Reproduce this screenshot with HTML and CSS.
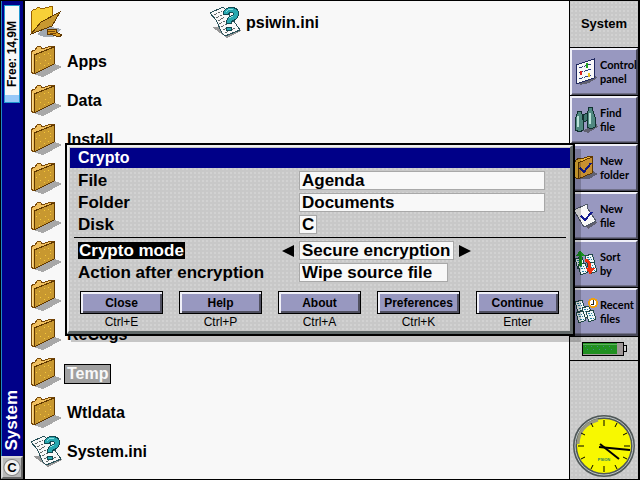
FILE: index.html
```html
<!DOCTYPE html>
<html lang="en">
<head>
    <meta charset="UTF-8">
    <meta name="viewport" content="width=device-width, initial-scale=1.0">
    <title>System - Crypto</title>
    <link rel="stylesheet" href="styles.css">
</head>
<body>

    <!-- shared icons -->
    <svg class="defs" width="0" height="0" aria-hidden="true">
        <symbol id="folder" viewBox="0 0 32 32">
            <path d="M3 29 L23 18 L32 22 L15 31 L12 32 Z" fill="#a8a8a8"/>
            <path d="M1 8 L3 5 L5 5 L8 1 L11 2 L12 4 L21 1 L24 2 V19 L4 29 L1 27 Z" fill="#f0c060" stroke="#784808"/>
            <path d="M4 10 L24 2 V19 L4 29 Z" fill="#c89830" stroke="#603800"/>
            <path d="M2 9 V27" stroke="#f8d888"/>
            <path d="M9 12h1M14 9h1M18 8h1M20 13h1M10 18h1M15 15h1M18 18h1M14 20h1M9 24h1M6 15h1M20 10h1" stroke="#f8c838"/>
        </symbol>
        <symbol id="folder-up" viewBox="0 0 32 32">
            <path d="M7 28 L18 20 L31 23 L24 31 L14 31 Z" fill="#a0a8b0"/>
            <path d="M1 6 L4 3 L6 3 L8 1 L12 3 L22 0 L23 8 L19 17 L4 27 L1 28 Z" fill="#f8d038" stroke="#986000"/>
            <path d="M1 28 L11 16 L30 6 L22 20 Z" fill="#c89830" stroke="#603800"/>
            <path d="M17 23 L26 23 L26 26 L32 29 L29 31 L20 28 L17 29 Z" fill="#d89820" stroke="#603800"/>
            <path d="M18 25h7M20 27h6" stroke="#784808"/>
        </symbol>
        <symbol id="help-file" viewBox="0 0 32 32">
            <path d="M3 21 L18 32 L32 25 L29 21 Z" fill="#989898"/>
            <path d="M1 7 L14 1 L17 4 L31 24 L16 30 L13 27 L7 14 Z" fill="#f8f8f8" stroke="#285058"/>
            <path d="M5 9l8-4M7 12l8-4M9 15l7-4M10 18l8-4M12 21l6-3M14 24l6-3M16 27l10-5" stroke="#606868" stroke-dasharray="3 1"/>
            <path d="M17 9 Q17 4 22 4 Q27 4 27 8 Q27 11 22 13 Q20 14 20 18" fill="none" stroke="#104850" stroke-width="6"/>
            <path d="M17 8 Q17 4 22 4 Q27 4 27 8 Q27 11 22 13 Q20 14 20 17" fill="none" stroke="#28a8b0" stroke-width="4"/>
            <path d="M17 6 Q20 2 24 4M20 12l4-2" fill="none" stroke="#88e0e0"/>
            <ellipse cx="20" cy="23" rx="3" ry="2" fill="#28a8b0" stroke="#104850"/>
        </symbol>
        <symbol id="sheet" viewBox="0 0 12 14">
            <path d="M1 3 L8 1 L11 10 L4 13 Z" fill="#f0f8f8" stroke="#204848"/>
            <path d="M3 5l4-1M4 7l4-1M5 10l4-1" stroke="#2880a0" stroke-dasharray="2 1"/>
        </symbol>
    </svg>

    <div class="screen">
        <aside class="titlebar">
            <div class="memory"><span>Free: 14,9M</span></div>
            <span class="app-name">System</span>
            <button class="drive" type="button">C</button>
        </aside>

        <main class="desktop">
            <ul class="files">
                <li><svg><use href="#folder-up"/></svg></li>
                <li><svg><use href="#folder"/></svg><span>Apps</span></li>
                <li><svg><use href="#folder"/></svg><span>Data</span></li>
                <li><svg><use href="#folder"/></svg><span>Install</span></li>
                <li><svg><use href="#folder"/></svg></li>
                <li><svg><use href="#folder"/></svg></li>
                <li><svg><use href="#folder"/></svg></li>
                <li><svg><use href="#folder"/></svg></li>
                <li><svg><use href="#folder"/></svg><span>ReCogs</span></li>
                <li><svg><use href="#folder"/></svg><span class="selected">Temp</span></li>
                <li><svg><use href="#folder"/></svg><span>Wtldata</span></li>
                <li><svg><use href="#help-file"/></svg><span>System.ini</span></li>
                <li><svg><use href="#help-file"/></svg><span>psiwin.ini</span></li>
            </ul>
        </main>

        <nav class="toolbar">
            <h1 class="toolbar-title">System</h1>
            <button class="tool" type="button">
                <svg viewBox="0 0 24 30">
                    <path d="M4 24 L20 18 L23 21 L15 26 L6 28 Z" fill="#606070"/>
                    <path d="M2 8 L20 2 V21 L2 27 Z" fill="#f8f8f8" stroke="#202860"/>
                    <path d="M5 11l12-4M5 16l12-4M5 22l12-4" stroke="#304080" stroke-dasharray="4 1"/>
                    <path d="M13 6v5" stroke="#20a020" stroke-width="2"/>
                    <path d="M7 14v4" stroke="#e02020" stroke-width="2"/>
                    <path d="M15 16v4" stroke="#e8c020" stroke-width="2"/>
                </svg>
                <span>Control panel</span>
            </button>
            <button class="tool" type="button">
                <svg viewBox="0 0 24 30">
                    <path d="M8 26 L23 19 L24 22 L14 28 Z" fill="#606070"/>
                    <path d="M9 10 L15 7 V15 L9 17 Z" fill="#407870" stroke="#103030"/>
                    <path d="M3 9 L4 6 H7 L8 9 L9 15 V25 L6 27 L1 25 V15 Z" fill="#508880" stroke="#103030"/>
                    <path d="M14 6 L15 2 H18 L19 6 L21 12 V22 L17 24 L13 22 V12 Z" fill="#508880" stroke="#103030"/>
                    <path d="M4 11v11M16 8v11" stroke="#b8e0d8" stroke-width="2"/>
                </svg>
                <span>Find<br>file</span>
            </button>
            <button class="tool" type="button">
                <svg viewBox="0 0 24 30">
                    <path d="M5 26 L19 18 L24 21 L15 26 Z" fill="#606070"/>
                    <path d="M0 10 L2 7 L5 5 L8 6 L15 3 L18 4 V20 L4 26 L0 24 Z" fill="#f0b838" stroke="#603800"/>
                    <path d="M4 10 L18 4 V20 L4 26 Z" fill="#c89030" stroke="#603800"/>
                    <path d="M6 15 L10 19 L17 10" fill="none" stroke="#101880" stroke-width="2"/>
                </svg>
                <span>New folder</span>
            </button>
            <button class="tool" type="button">
                <svg viewBox="0 0 24 30">
                    <path d="M8 22 L22 20 L23 22 L14 28 Z" fill="#606070"/>
                    <path d="M0 9 L13 3 L14 8 L22 20 L10 26 L5 18 Z" fill="#f8f8f8" stroke="#505868"/>
                    <path d="M7 15 L11 19 L18 11" fill="none" stroke="#101890" stroke-width="2"/>
                </svg>
                <span>New<br>file</span>
            </button>
            <button class="tool" type="button">
                <svg viewBox="0 0 24 30">
                    <use href="#sheet" x="0" y="7" width="12" height="14"/>
                    <use href="#sheet" x="10" y="4" width="12" height="14"/>
                    <use href="#sheet" x="3" y="13" width="12" height="14"/>
                    <use href="#sheet" x="12" y="12" width="12" height="14"/>
                    <path d="M6 17 V6" stroke="#189020" stroke-width="3"/>
                    <path d="M2 7 L6 1 L11 7 Z" fill="#189020"/>
                    <path d="M11 11 Q16 11 16 20" fill="none" stroke="#f03010" stroke-width="3"/>
                    <path d="M12 19 H21 L16 26 Z" fill="#f03010"/>
                </svg>
                <span>Sort<br>by</span>
            </button>
            <button class="tool" type="button">
                <svg viewBox="0 0 24 30">
                    <use href="#sheet" x="0" y="2" width="12" height="14"/>
                    <use href="#sheet" x="7" y="8" width="12" height="14"/>
                    <use href="#sheet" x="1" y="13" width="12" height="14"/>
                    <use href="#sheet" x="11" y="12" width="12" height="14"/>
                    <circle cx="19" cy="6" r="4" fill="#fff" stroke="#f0a010" stroke-width="2"/>
                    <path d="M19 3v4h-2" fill="none" stroke="#202020"/>
                </svg>
                <span>Recent files</span>
            </button>
            <div class="battery">
                <svg viewBox="0 0 46 15">
                    <rect x="42" y="4" width="3" height="6" fill="#d0d0d0" stroke="#000"/>
                    <rect x="1" y="1" width="41" height="13" fill="#a09898" stroke="#000"/>
                    <rect x="2" y="2" width="34" height="11" fill="#209020"/>
                    <path d="M2 3h34" stroke="#60b060"/>
                    <path d="M4 5h30M6 8h30" stroke="#408888" stroke-dasharray="1 5"/>
                </svg>
            </div>
            <div class="clock">
                <svg viewBox="0 0 62 62">
                    <circle cx="31" cy="31" r="29" fill="#f8f800" stroke="#505858" stroke-width="4"/>
                    <circle cx="31" cy="31" r="29" fill="none" stroke="#c0c8c8"/>
                    <path d="M5 29 Q6 10 25 5" fill="none" stroke="#989880" stroke-width="3"/>
                    <path d="M31 5v6M31 51v6M5 31h6M51 31h6M18 8l2 4M42 50l2 4M44 8l-2 4M20 50l-2 4M8 18l4 2M50 42l4 2M54 18l-4 2M12 42l-4 2" stroke="#000"/>
                    <text class="clock-brand" x="31" y="46">PSION</text>
                    <path d="M27 29 L46 44" stroke="#000" stroke-width="2"/>
                    <path d="M26 32 L57 35" stroke="#000" stroke-width="2"/>
                </svg>
            </div>
        </nav>

        <form class="dialog" role="dialog" aria-labelledby="dialog-title">
            <div class="dialog-inner">
                <h2 id="dialog-title">Crypto</h2>
                <div class="fields">
                    <div class="row">
                        <label for="file">File</label>
                        <div class="control"><input class="wide" id="file" type="text" value="Agenda"></div>
                    </div>
                    <div class="row">
                        <label for="folder-name">Folder</label>
                        <div class="control"><input class="wide" id="folder-name" type="text" value="Documents"></div>
                    </div>
                    <div class="row">
                        <label for="disk">Disk</label>
                        <div class="control"><input class="letter" id="disk" type="text" value="C"></div>
                    </div>
                </div>
                <div class="fields options">
                    <div class="row">
                        <label for="mode"><span class="current">Crypto mode</span></label>
                        <button class="arrow" type="button" aria-label="Previous"><svg viewBox="0 0 12 12"><path d="M12 0 V12 L0 6 Z"/></svg></button>
                        <div class="control">
                            <select id="mode"><option>Secure encryption</option></select>
                            <button class="arrow" type="button" aria-label="Next"><svg viewBox="0 0 12 12"><path d="M0 0 V12 L12 6 Z"/></svg></button>
                        </div>
                    </div>
                    <div class="row">
                        <label for="action">Action after encryption</label>
                        <div class="control"><select class="action" id="action"><option>Wipe source file</option></select></div>
                    </div>
                </div>
                <div class="buttons">
                    <div><button type="button">Close</button><kbd>Ctrl+E</kbd></div>
                    <div><button type="button">Help</button><kbd>Ctrl+P</kbd></div>
                    <div><button type="button">About</button><kbd>Ctrl+A</kbd></div>
                    <div><button type="button">Preferences</button><kbd>Ctrl+K</kbd></div>
                    <div><button type="button">Continue</button><kbd>Enter</kbd></div>
                </div>
            </div>
        </form>
    </div>

</body>
</html>
```
FILE: styles.css
```css
* {
    box-sizing: border-box;
}

body {
    margin: 0;
    font-family: "Liberation Sans", Arial, sans-serif;
    font-size: 16px;
    font-weight: bold;
    color: #000;
}

button, input, select {
    font: inherit;
    color: inherit;
    margin: 0;
    padding: 0;
    border-radius: 0;
}

button {
    cursor: pointer;
}

.defs {
    position: absolute;
}

.screen {
    position: relative;
    display: flex;
    min-height: 100vh;
    background-color: #f8f8f8;
    border: 1px solid #000;
    border-left-width: 0;
}

/* left title bar */
.titlebar {
    display: flex;
    flex-direction: column;
    align-items: center;
    width: 25px;
    padding-top: 4px;
    background-color: #000088;
    border-left: 1px solid #000;
    border-right: 2px solid #000;
    box-shadow: inset 1px 0 #2088c0;
}

.memory {
    display: flex;
    align-items: center;
    justify-content: center;
    width: 16px;
    height: 98px;
    background: linear-gradient(#f8f8f8 89px, #98c8f8 89px);
    border: 1px solid #2098d0;
    font-size: 12px;
}

.memory span, .app-name {
    writing-mode: vertical-rl;
    transform: rotate(180deg);
}

.app-name {
    margin-top: auto;
    margin-bottom: 6px;
    color: #fff;
    font-size: 17px;
}

.drive {
    width: 22px;
    height: 23px;
    border: 2px solid;
    border-color: #d8d8d8 #686868 #686868 #d8d8d8;
    background: radial-gradient(circle, #f0f0f0 7px, #888 8px, #b8b8b8 9px);
    font-size: 13px;
}

/* file list */
.desktop {
    flex: 1;
    min-width: 0;
}

.files {
    display: grid;
    grid-auto-flow: column;
    grid-template-rows: repeat(12, 39px);
    grid-auto-columns: 179px;
    margin: 0;
    padding: 2px 0 0 5px;
    list-style: none;
}

.files li {
    display: flex;
    align-items: center;
    gap: 2px;
}

.files svg {
    width: 32px;
    height: 32px;
    margin-bottom: 1px;
    shape-rendering: crispEdges;
}

.files span {
    padding: 0 2px;
    border: 1px solid transparent;
    line-height: 18px;
}

.files .selected {
    background-color: #a0a0a0;
    border-color: #000;
    color: #f8f8f8;
}

/* right toolbar */
.toolbar {
    display: flex;
    flex-direction: column;
    width: 70px;
    background: radial-gradient(#d2d2d2 1px, transparent 1px) 0 0 / 4px 4px #c8c8c8;
    border-left: 1px solid #000;
    border-right: 1px solid #000;
}

.toolbar-title {
    height: 47px;
    margin: 0;
    font-size: 13px;
    line-height: 46px;
    text-align: center;
}

.tool {
    display: flex;
    align-items: center;
    gap: 2px;
    height: 48px;
    padding: 0 0 0 2px;
    background-color: #9898c0;
    border: solid;
    border-width: 2px;
    border-color: #f0f0f8 #484858 #484858 #f0f0f8;
    box-shadow: inset 0 -1px #707088, 0 -1px #000;
    font-family: Lato, "Liberation Sans", sans-serif;
    font-size: 11px;
    line-height: 14px;
    text-align: left;
}

.tool svg {
    flex: none;
    width: 24px;
    height: 30px;
    shape-rendering: crispEdges;
}

.battery {
    display: flex;
    align-items: center;
    justify-content: center;
    height: 25px;
    border-top: 1px solid #000;
    border-bottom: 1px solid #000;
}

.battery svg {
    width: 46px;
    height: 15px;
    shape-rendering: crispEdges;
}

.clock {
    display: flex;
    justify-content: center;
    margin-top: auto;
    padding-bottom: 2px;
}

.clock svg {
    width: 62px;
    height: 62px;
}

.clock-brand {
    fill: #208060;
    font-size: 4px;
    text-anchor: middle;
}

/* crypto dialog */
.dialog {
    position: absolute;
    top: 142px;
    left: 65px;
    width: 510px;
    border: 2px solid #000;
    box-shadow: 6px 6px rgba(0, 0, 0, 0.2);
    font-size: 17px;
}

.dialog-inner {
    padding: 1px 0 0 1px;
    background: radial-gradient(#d2d2d2 1px, transparent 1px) 0 0 / 4px 4px #c8c8c8;
    border: solid;
    border-width: 2px 3px 3px 2px;
    border-color: #f0f0f0 #606868 #606868 #f0f0f0;
}

.dialog h2 {
    margin: 0;
    padding-left: 8px;
    background-color: #000088;
    color: #fff;
    font-size: 16px;
    line-height: 20px;
}

.fields {
    display: grid;
    gap: 3px;
    margin: 0 4px;
    padding: 3px 4px;
}

.options {
    border-top: 1px solid #000;
}

.row {
    display: grid;
    grid-template-columns: 199px 12px 1fr;
    column-gap: 5px;
    align-items: center;
    height: 19px;
}

.row label {
    grid-column: 1;
    line-height: 17px;
    white-space: nowrap;
}

.current {
    display: inline-block;
    padding: 0 1px;
    background-color: #000;
    color: #fff;
}

.control {
    grid-column: 3;
    display: flex;
    align-items: center;
    gap: 5px;
}

.control input, .control select {
    appearance: none;
    width: 155px;
    height: 19px;
    padding: 0 2px;
    border: 1px solid #a8a8a8;
    background-color: #f8f8f8;
    line-height: 17px;
}

.control .wide {
    width: 246px;
}

.control .letter {
    width: 18px;
}

.control .action {
    width: 149px;
}

.arrow {
    display: flex;
    background: none;
    border: none;
}

.arrow svg {
    width: 12px;
    height: 12px;
}

.buttons {
    display: flex;
    gap: 16px;
    padding: 6px 11px 2px 10px;
}

.buttons div {
    flex: 1;
    display: flex;
    flex-direction: column;
}

.buttons button {
    height: 23px;
    border: 1px solid #000;
    background-color: #9898c0;
    box-shadow: inset 2px 2px #f0f0f8, inset -2px -2px #505060;
    font-size: 12px;
}

.buttons kbd {
    padding-top: 1px;
    font-family: inherit;
    font-size: 12px;
    font-weight: normal;
    line-height: 14px;
    text-align: center;
}
```
